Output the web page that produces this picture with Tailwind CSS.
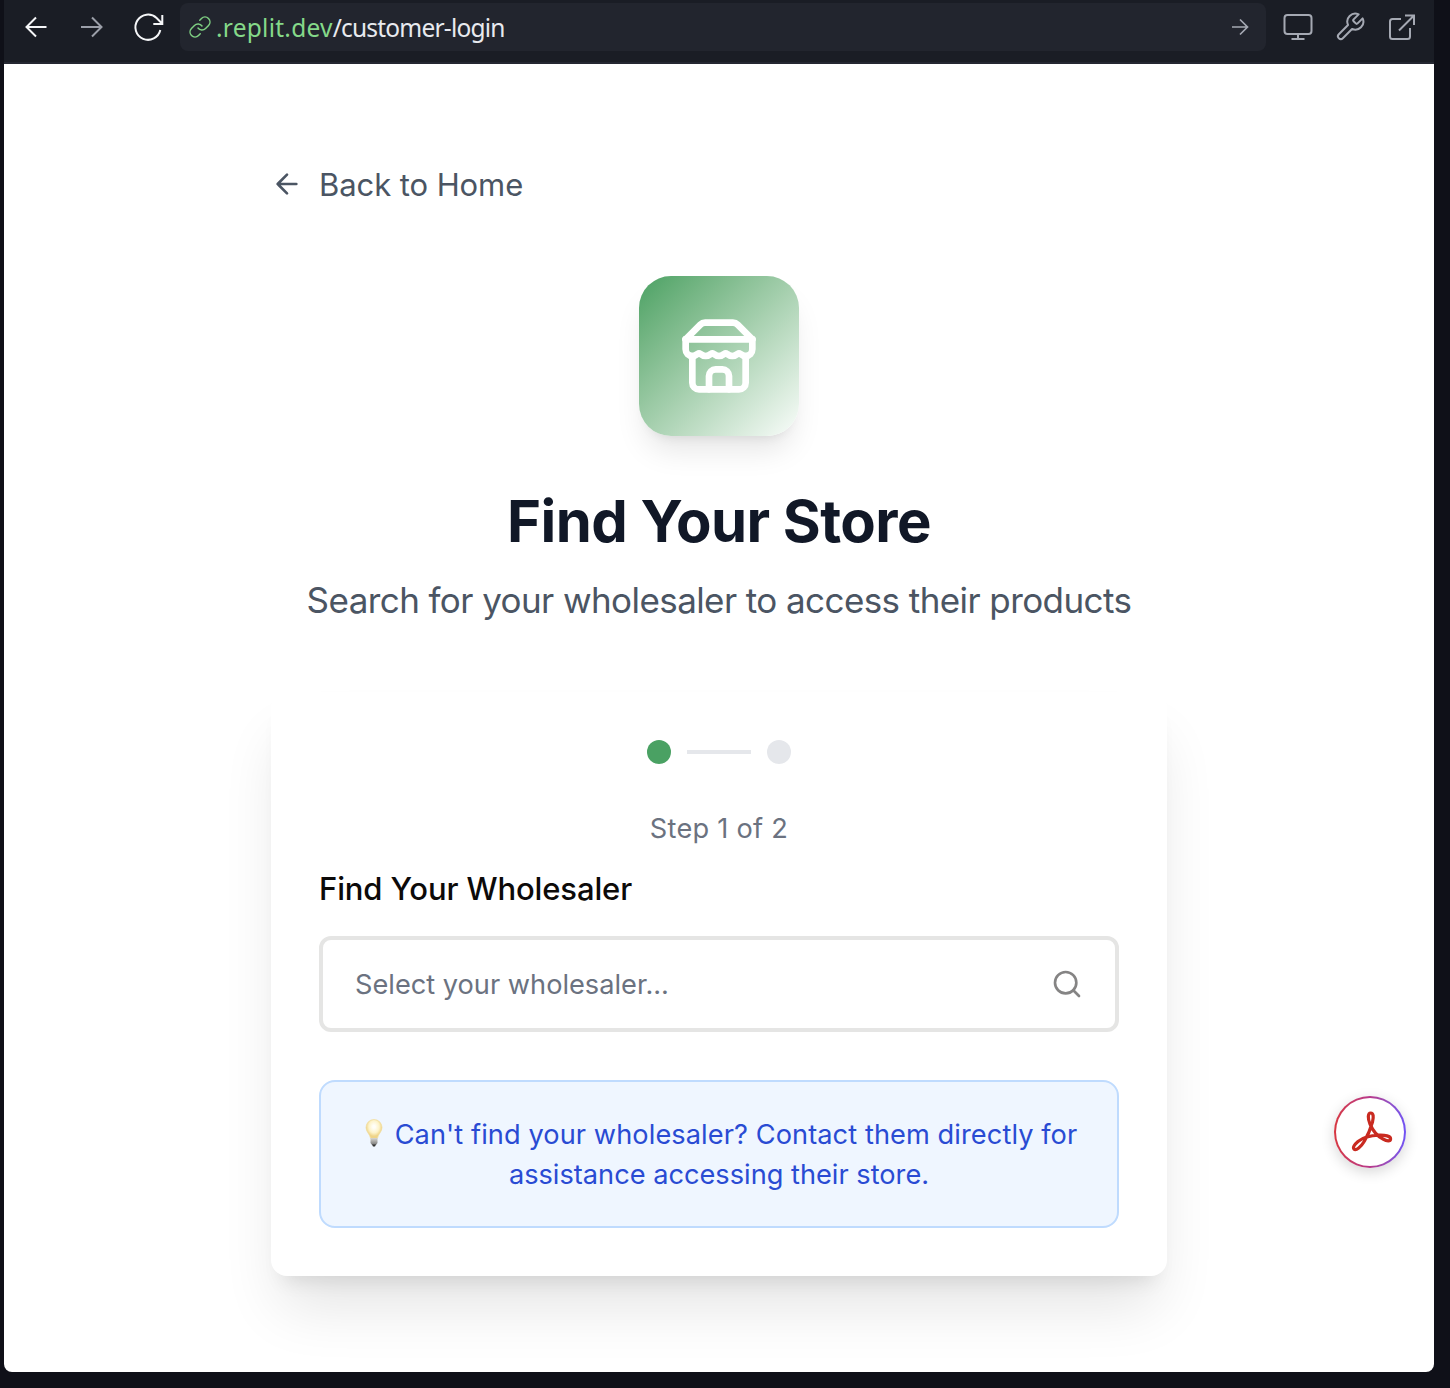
<!DOCTYPE html>
<html lang="en">
<head>
<meta charset="utf-8">
<title>Customer login</title>
<script src="https://cdn.jsdelivr.net/npm/@tailwindcss/browser@4"></script>
</head>
<body class="h-[1388px] w-[1450px] overflow-hidden bg-[#0f1018] pr-4 pl-1 font-['Inter',sans-serif]">
<div class="flex h-[1372px] flex-col overflow-hidden rounded-b-lg bg-white">
  <header class="flex h-16 shrink-0 items-start border-b-2 border-[#242731] bg-[#1a1d25]">
    <nav class="flex h-[54px] w-44 shrink-0 items-center gap-6 pl-4 text-[#f5f6f8]">
      <svg class="size-8" viewBox="0 0 32 32" fill="none" stroke="currentColor" stroke-width="2"><path d="M26.500 16H7M16 6.500 6.500 16l9.500 9.500"/></svg>
      <svg class="size-8 text-[#9b9fa9]" viewBox="0 0 32 32" fill="none" stroke="currentColor" stroke-width="2"><path d="M5 16h20.500M16 6.500l9.500 9.500-9.500 9.500"/></svg>
      <svg class="size-8" viewBox="0 0 32 32" fill="none" stroke="currentColor" stroke-width="2"><path d="M28.300 19A12.600 12.600 0 1 1 24.600 7L29.500 12M30.300 4v9h-9"/></svg>
    </nav>
    <div class="mt-[3px] flex h-12 w-[1086px] items-center rounded-lg bg-[#22252e] pr-3 pl-2">
      <svg class="mr-1 size-6 text-[#7fd083]" viewBox="0 0 24 24" fill="none" stroke="currentColor" stroke-width="1.500" stroke-linecap="round"><path d="M10 13a5 5 0 0 0 7.540.540l3-3a5 5 0 0 0-7.070-7.070l-1.720 1.710"/><path d="M14 11a5 5 0 0 0-7.540-.540l-3 3a5 5 0 0 0 7.070 7.070l1.710-1.710"/></svg>
      <p class="flex-1 pt-[3px] whitespace-nowrap font-['Noto_Sans',sans-serif] text-[24.5px] tracking-[-0.8px] text-[#e8eaef]"><span class="tracking-[0.25px] text-[#85d989]">.replit.dev</span>/customer-login</p>
      <svg class="size-7 text-[#a5a9b3]" viewBox="0 0 28 28" fill="none" stroke="currentColor" stroke-width="1.700"><path d="M6 14h15.500M14 6.500l7.500 7.500-7.500 7.500"/></svg>
    </div>
    <div class="flex h-[54px] items-center gap-5 pl-4 text-[#a5a9b3]">
      <svg class="size-8" viewBox="0 0 32 32" fill="none" stroke="currentColor" stroke-width="2"><rect x="2.500" y="4" width="27" height="19" rx="3"/><path d="M16 23v5M9.500 28h13"/></svg>
      <svg class="size-8" viewBox="0 0 24 24" fill="none" stroke="currentColor" stroke-width="1.500" stroke-linejoin="round"><path d="M14.700 6.300a1 1 0 0 0 0 1.400l1.600 1.600a1 1 0 0 0 1.400 0l3.770-3.770a6 6 0 0 1-7.940 7.940l-6.910 6.910a2.120 2.120 0 0 1-3-3l6.910-6.910a6 6 0 0 1 7.940-7.940l-3.760 3.760z"/></svg>
      <svg class="size-8" viewBox="0 0 32 32" fill="none" stroke="currentColor" stroke-width="2"><path d="M15 8H6.500a2.500 2.500 0 0 0-2.500 2.500v15A2.500 2.500 0 0 0 6.500 28h15a2.500 2.500 0 0 0 2.500-2.500V17M19 4.500h9V14M28 4.500 13 19.500"/></svg>
    </div>
  </header>

  <main class="flex flex-1 flex-col items-center pt-24">
    <div class="flex w-[896px] flex-col">
      <a class="flex h-12 items-center gap-4 text-[#4b5563]">
        <svg class="size-8" viewBox="0 0 24 24" fill="none" stroke="currentColor" stroke-width="2" stroke-linecap="round" stroke-linejoin="round"><path d="m12 19-7-7 7-7M19 12H5"/></svg>
        <span class="pt-px text-[31px] leading-12 tracking-[-0.08px]">Back to Home</span>
      </a>
      <div class="mt-[68px] flex size-40 items-center justify-center self-center rounded-[32px] bg-linear-to-br from-[#4aa163] to-[#fafdfb] shadow-[0_20px_30px_-6px_rgba(0,0,0,0.1),0_8px_12px_-8px_rgba(0,0,0,0.1)]">
        <svg class="size-20 text-white" viewBox="0 0 24 24" fill="none" stroke="currentColor" stroke-width="2" stroke-linecap="round" stroke-linejoin="round"><path d="m2 7 4.410-4.410A2 2 0 0 1 7.830 2h8.340a2 2 0 0 1 1.420.590L22 7"/><path d="M4 12v8a2 2 0 0 0 2 2h12a2 2 0 0 0 2-2v-8"/><path d="M15 22v-4a2 2 0 0 0-2-2h-2a2 2 0 0 0-2 2v4"/><path d="M2 7h20"/><path d="M22 7v3a2 2 0 0 1-2 2a2.700 2.700 0 0 1-1.590-.630.700.700 0 0 0-.820 0A2.700 2.700 0 0 1 16 12a2.700 2.700 0 0 1-1.590-.630.700.700 0 0 0-.820 0A2.700 2.700 0 0 1 12 12a2.700 2.700 0 0 1-1.590-.630.700.700 0 0 0-.820 0A2.700 2.700 0 0 1 8 12a2.700 2.700 0 0 1-1.590-.630.700.700 0 0 0-.820 0A2.700 2.700 0 0 1 4 12a2 2 0 0 1-2-2V7"/></svg>
      </div>
      <h1 class="mt-[49px] text-center text-[58px] leading-[72px] font-bold tracking-[-0.55px] text-[#111827]">Find Your Store</h1>
      <p class="mt-[15px] whitespace-nowrap text-center text-[35px] leading-[56px] tracking-[-0.58px] text-[#4b5563]">Search for your wholesaler to access their products</p>

      <section class="mt-16 flex h-[584px] flex-col rounded-2xl bg-white px-12 pt-12 shadow-[0_40px_60px_-10px_rgba(0,0,0,0.11),0_16px_20px_-12px_rgba(0,0,0,0.1)]">
        <div class="flex h-6 items-center justify-center gap-4">
          <span class="size-6 rounded-full bg-[#4aa163]"></span>
          <span class="h-1 w-16 bg-[#e5e7eb]"></span>
          <span class="size-6 rounded-full bg-[#e5e7eb]"></span>
        </div>
        <p class="mt-[45px] text-center text-[27.2px] leading-10 tracking-[0.25px] text-[#6b7280]">Step 1 of 2</p>
        <h2 class="mt-4 text-[31px] leading-12 font-medium tracking-[-0.12px] text-[#0c0a09]">Find Your Wholesaler</h2>
        <button class="mt-[23px] flex h-24 items-center justify-between rounded-xl border-4 border-[#e5e5e4] pr-8 pl-8 text-left">
          <span class="pt-[3px] text-[27.2px] text-[#6b7280]">Select your wholesaler...</span>
          <svg class="size-8 text-[#858484]" viewBox="0 0 24 24" fill="none" stroke="currentColor" stroke-width="2" stroke-linecap="round"><circle cx="11" cy="11" r="8"/><path d="m21 21-4.300-4.300"/></svg>
        </button>
        <div class="mt-12 flex h-[148px] flex-col items-center justify-center rounded-2xl border-2 border-[#bfdbfe] bg-[#eff6ff] pt-px whitespace-nowrap text-[27.2px] leading-10 text-[#294bd3]">
          <p class="flex items-center pl-1 tracking-[0.08px]">
            <svg class="-mt-1 mr-3 h-7 w-[18px]" viewBox="0 0 18 28"><defs><radialGradient id="glow" cx=".5" cy=".38"><stop offset=".15" stop-color="#fffef8"/><stop offset=".65" stop-color="#fdf3c9"/><stop offset="1" stop-color="#efd488"/></radialGradient><linearGradient id="cap" x1="0" y1="0" x2="0" y2="1"><stop offset="0" stop-color="#d8d7d2"/><stop offset="1" stop-color="#777"/></linearGradient></defs><path d="M9 .5a8 8 0 0 0-8 8c0 4.500 4 6.500 4.600 11h6.800C13 15 17 13 17 8.500a8 8 0 0 0-8-8Z" fill="url(#glow)" stroke="#f0dc9c" stroke-width=".7"/><path d="M5.500 19h7v5l-1.500 2H7l-1.500-2Z" fill="url(#cap)"/><path d="M7 25.500h4L10 27.500H8Z" fill="#333"/></svg>
            <span>Can't find your wholesaler? Contact them directly for</span>
          </p>
          <p>assistance accessing their store.</p>
        </div>
      </section>
    </div>
  </main>
</div>

<div class="absolute top-[1096px] left-[1334px] size-[72px] rounded-full bg-linear-to-r from-[#d7373f] via-[#b8388a] to-[#6f52f5] p-0.5 shadow-[0_4px_14px_rgba(0,0,0,0.16)]">
  <div class="flex size-full items-center justify-center rounded-full bg-white">
    <svg class="size-[68px]" viewBox="0 0 68 68" fill="none" stroke="#c92a20" stroke-width="3.200" stroke-linejoin="round"><path d="M34.700 15C31.500 15 31.800 21 34 26C36.500 32 41 38 47 41C51 43.300 54.300 43.500 54.600 41C54.800 38 49 37 43 37.200C36 37.500 27 39.500 22 43.500C18.500 46.500 16.500 49.500 18 51C20 53 25 49 28.500 43C32 37 34.500 31 36.500 24C37.800 19 37.500 15 34.700 15Z"/></svg>
  </div>
</div>
</body>
</html>
